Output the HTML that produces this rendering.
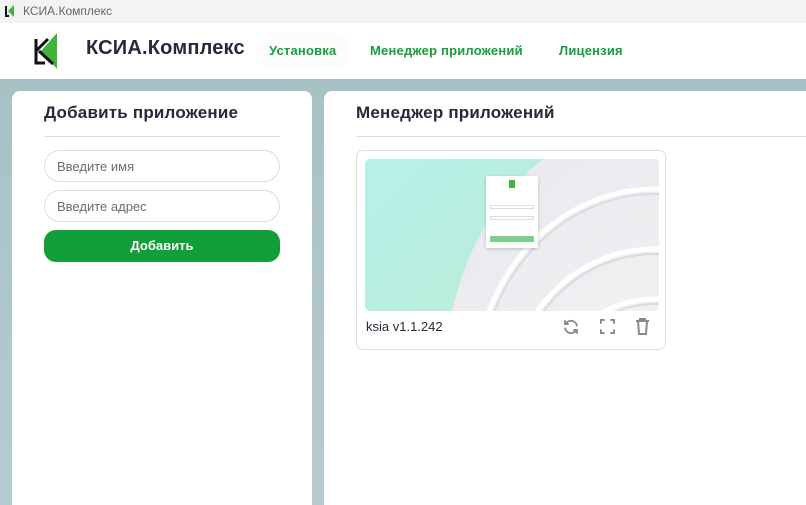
<!DOCTYPE html>
<html><head><meta charset="utf-8"><style>
*{margin:0;padding:0;box-sizing:border-box}
html,body{width:806px;height:505px;overflow:hidden}
body{font-family:"Liberation Sans","DejaVu Sans",sans-serif;background:linear-gradient(180deg,#a5bfc2,#b5cccf);position:relative}
.tb{position:absolute;left:0;top:0;width:806px;height:23px;background:#f3f3f3;font-size:12px;color:#666;}
.tb span{position:absolute;left:23px;top:4px}
.hdr{position:absolute;left:0;top:23px;width:806px;height:56px;background:#fff}
.brand{position:absolute;left:86px;top:14px;font-size:20px;font-weight:bold;color:#262a38;letter-spacing:.2px}
.nav{position:absolute;top:20px;font-size:13px;font-weight:bold;color:#17a03c;letter-spacing:.2px}
.pill{position:absolute;left:257px;top:9px;width:93px;height:37px;border-radius:18px;background:#fcfcfc}
.p1{position:absolute;left:12px;top:91px;width:300px;height:414px;background:#fff;border-radius:8px 8px 0 0}
.p2{position:absolute;left:324px;top:91px;width:482px;height:414px;background:#fff;border-radius:8px 0 0 0}
h2{position:absolute;font-size:17px;font-weight:bold;color:#262a38;letter-spacing:.2px}
.hr{position:absolute;height:1px;background:#ddd}
.inp{position:absolute;left:32px;width:236px;height:32px;border:1px solid #ddd;border-radius:16px;font-size:13px;color:#6a6a75;padding:8px 0 0 12px}
.btn{position:absolute;left:32px;top:139px;width:236px;height:32px;border-radius:12px;background:#119e38;color:#fff;font-weight:bold;font-size:13px;text-align:center;line-height:32px}
.card{position:absolute;left:32px;top:59px;width:310px;height:200px;border:1px solid #ddd;border-radius:7px;background:#fff}
.img{position:absolute;left:8px;top:8px;width:294px;height:152px;border-radius:5px;overflow:hidden;background:linear-gradient(135deg,#b5f0ea,#bdeccf)}
.lbl{position:absolute;left:9px;top:168px;font-size:13px;color:#262a38}
</style></head><body>
<div class="tb"><svg style="position:absolute;left:5px;top:5px" width="11" height="12" viewBox="0 0 11 12"><path d="M1 1v10h3" stroke="#111" stroke-width="2" fill="none"/><path d="M9 0L3 6l6 6z" fill="#3eb53a"/></svg><span>КСИА.Комплекс</span></div>
<div class="hdr">
<svg style="position:absolute;left:33px;top:8px" width="28" height="40" viewBox="0 0 28 40"><path d="M24 2L8 20l16 18z" fill="#3eb53a"/><path d="M3 8v24h9M3 20l12-12M6 20l14 13" stroke="#111" stroke-width="3" fill="none"/></svg>
<div class="brand">КСИА.Комплекс</div>
<div class="pill"></div>
<div class="nav" style="left:269px">Установка</div>
<div class="nav" style="left:370px">Менеджер приложений</div>
<div class="nav" style="left:559px">Лицензия</div>
</div>
<div class="p1">
<h2 style="left:32px;top:12px">Добавить приложение</h2>
<div class="hr" style="left:32px;top:45px;width:236px"></div>
<div class="inp" style="top:59px">Введите имя</div>
<div class="inp" style="top:99px">Введите адрес</div>
<div class="btn">Добавить</div>
</div>
<div class="p2">
<h2 style="left:32px;top:12px">Менеджер приложений</h2>
<div class="hr" style="left:32px;top:45px;width:450px"></div>
<div class="card">
<div class="img">
<svg width="294" height="152" style="position:absolute;left:0;top:0"><defs><radialGradient id="g" cx="0.6" cy="0.7" r="0.7"><stop offset="0" stop-color="#f6f6f8"/><stop offset="1" stop-color="#ebebef"/></radialGradient></defs>
<ellipse cx="290" cy="220" rx="210" ry="260" fill="url(#g)"/>
<ellipse cx="290" cy="230" rx="180" ry="200" fill="none" stroke="#fff" stroke-width="5" opacity=".9"/>
<ellipse cx="290" cy="230" rx="175" ry="195" fill="none" stroke="#dcdce0" stroke-width="2"/>
<ellipse cx="290" cy="240" rx="145" ry="150" fill="none" stroke="#fff" stroke-width="5"/>
<ellipse cx="290" cy="240" rx="140" ry="145" fill="none" stroke="#dadade" stroke-width="2"/>
<ellipse cx="290" cy="250" rx="110" ry="110" fill="none" stroke="#fff" stroke-width="5"/>
<ellipse cx="290" cy="250" rx="105" ry="105" fill="none" stroke="#dcdce0" stroke-width="2"/>
</svg>
<div style="position:absolute;left:121px;top:17px;width:52px;height:72px;background:#fff;border-radius:2px;box-shadow:0 1px 3px rgba(0,0,0,.2)">
<div style="position:absolute;left:23px;top:4px;width:6px;height:8px;background:#3eb53a"></div>
<div style="position:absolute;left:4px;top:40px;width:44px;height:4px;border:1px solid #ddd"></div>
<div style="position:absolute;left:4px;top:29px;width:44px;height:4px;border:1px solid #ddd"></div>
<div style="position:absolute;left:4px;top:60px;width:44px;height:6px;background:#7dcf8d;border-radius:1px"></div>
</div>
</div>
<div class="lbl">ksia v1.1.242</div>
<svg style="position:absolute;left:205px;top:167px" width="18" height="18" viewBox="0 0 24 24" fill="none" stroke="#888" stroke-width="2.5"><path d="M20 11A8 8 0 0 0 5 8M4 13a8 8 0 0 0 15 3"/><path d="M4 3v5h5M20 21v-5h-5"/></svg>
<svg style="position:absolute;left:243px;top:168px" width="15" height="15" viewBox="0 0 16 16" fill="none" stroke="#888" stroke-width="2"><path d="M1 5V1h4M11 1h4v4M15 11v4h-4M5 15H1v-4"/></svg>
<svg style="position:absolute;left:278px;top:167px" width="15" height="17" viewBox="0 0 15 17" fill="none" stroke="#888" stroke-width="2"><path d="M1 3h13M5 3V1h5v2M3 3l1 13h7l1-13"/></svg>
</div>
</div>
</body></html>
